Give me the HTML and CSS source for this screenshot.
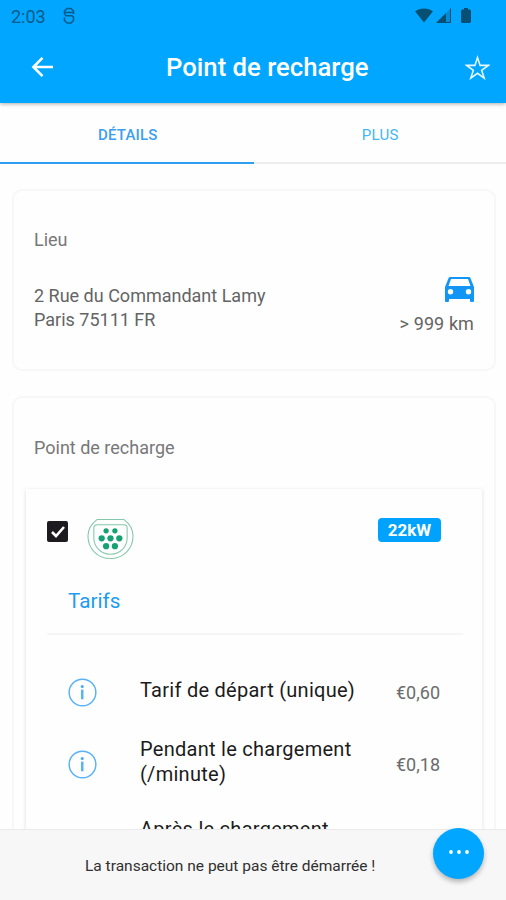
FILE: index.html
```html
<!DOCTYPE html>
<html lang="fr">
<head>
<meta charset="utf-8">
<title>Point de recharge</title>
<link rel="stylesheet" href="styles.css">
</head>
<body>
<div class="app">
  <header class="header">
    <div class="status">
      <span class="clock">2:03</span>
      <svg class="debug" viewBox="0 0 12 18"><path d="M1.500 7V4L4 1.500h4L10.500 4v3M1.500 7 3 8.700h6l1.500 1.500v3.300L8 16H4l-2.500-2.500v-3M2 5.500h8"/></svg>
      <svg class="signals" viewBox="0 0 58 18">
        <path d="M1 4.300C6 .4 14 .4 19 4.300L10 15.500z"/>
        <path d="M22 16 37 1v15z" opacity=".3"/><path d="M22 16 32 6v10zM36 2l1-1v15h-5v-1h4z"/>
        <path d="M48 2.500h2V1h4v1.500h2l1 1V15l-1 1h-8l-1-1V3.500z"/>
      </svg>
    </div>
    <div class="toolbar">
      <svg class="back" viewBox="0 0 24 22"><path d="M12 1.500 2.500 11l9.500 9.500M2.500 11H23"/></svg>
      <h1>Point de recharge</h1>
      <svg class="star" viewBox="0 0 26 25"><path d="m13 2 2.700 8.300h8.600l-7 5.100 2.700 8.200-7-5.100-7 5.100 2.700-8.200-7-5.100h8.600z"/></svg>
    </div>
  </header>
  <nav class="tabs">
    <div class="tab active"><span>DÉTAILS</span></div>
    <div class="tab"><span>PLUS</span></div>
  </nav>
  <main class="content">
    <section class="card place">
      <h2>Lieu</h2>
      <div class="place-row">
        <p class="address">2 Rue du Commandant Lamy<br>Paris 75111 FR</p>
        <div class="distance">
          <svg class="car" viewBox="0 0 29 25"><path fill-rule="evenodd" d="M5.500 0h18c1 0 1.700.5 2 1.300L29 10v14q0 1-1 1h-2q-1 0-1-1v-2H4v2q0 1-1 1H1q-1 0-1-1V10L3.500 1.300C3.800.5 4.500 0 5.500 0zM6 2 3.500 9h22L23 2zM5.500 12a2.700 2.700 0 1 0 0 5.400 2.700 2.700 0 1 0 0-5.400zM23.500 12a2.700 2.700 0 1 0 0 5.400 2.700 2.700 0 1 0 0-5.400z"/></svg>
          <span>&gt; 999 km</span>
        </div>
      </div>
    </section>
    <section class="card point">
      <h2>Point de recharge</h2>
      <div class="connector">
        <div class="connector-head">
          <svg class="check" viewBox="0 0 21 21"><rect width="21" height="21" rx="2"/><path d="m5 11 4 4L17 6"/></svg>
          <svg class="plug" viewBox="0 0 48 42">
            <path d="M10.500 1h27C43 5 47 11 47 18c0 13-10 23-23 23S1 31 1 18C1 11 5 5 10.500 1z"/>
            <path d="M10.500 6.500h27q3.500 0 3.500 3.500v10c0 9-7 16.500-17 16.500S7 29 7 20V10q0-3.500 3.500-3.500z"/>
            <g><circle cx="19.500" cy="12.700" r="2.700"/><circle cx="28.500" cy="12.700" r="2.700"/><circle cx="15" cy="20.300" r="3.200"/><circle cx="24" cy="20.300" r="3.200"/><circle cx="33" cy="20.300" r="3.200"/><circle cx="19.500" cy="28.300" r="3.200"/><circle cx="28.500" cy="28.300" r="3.200"/></g>
          </svg>
          <span class="power">22kW</span>
        </div>
        <h3>Tarifs</h3>
        <div class="rates">
          <div class="rate single">
            <svg class="info" viewBox="0 0 30 30"><circle cx="15" cy="15" r="13.800"/><path class="stem" d="M14.700 12v10"/><circle class="dot" cx="14.700" cy="8.800" r="1.600"/></svg>
            <span class="label">Tarif de départ (unique)</span><span class="price">€0,60</span>
          </div>
          <div class="rate">
            <svg class="info" viewBox="0 0 30 30"><circle cx="15" cy="15" r="13.800"/><path class="stem" d="M14.700 12v10"/><circle class="dot" cx="14.700" cy="8.800" r="1.600"/></svg>
            <span class="label">Pendant le chargement<br>(/minute)</span><span class="price">€0,18</span>
          </div>
          <div class="rate last"><span class="label">Après le chargement</span></div>
        </div>
      </div>
    </section>
  </main>
  <footer class="footer">
    <p>La transaction ne peut pas être démarrée !</p>
    <div class="fab"><svg viewBox="0 0 20 4"><circle cx="2" cy="2" r="1.900"/><circle cx="10" cy="2" r="1.900"/><circle cx="18" cy="2" r="1.900"/></svg></div>
  </footer>
</div>
</body>
</html>
```
FILE: styles.css
```css
* { box-sizing: border-box; margin: 0; padding: 0; }
body { font-family: Roboto, sans-serif; background: #fefefe; color: #646464; }
svg { display: block; flex: none; }
.app { width: 506px; height: 900px; display: flex; flex-direction: column; overflow: hidden; white-space: nowrap; }
.header { height: 103px; flex: none; background: #00a6ff; box-shadow: 0 1px 4px #0005; position: relative; }
.status { height: 34px; display: flex; align-items: center; padding: 0 34px 2px 11px; color: #075b88; }
.clock { font-size: 18px; }
.debug { width: 12px; height: 18px; margin-left: 17px; fill: none; stroke: #075b88; stroke-width: 1.600; }
.signals { width: 58px; height: 18px; margin-left: auto; fill: #075073; }
.toolbar { height: 66px; display: flex; align-items: center; padding: 0 16px 0 31px; }
.back { width: 23px; height: 22px; fill: none; stroke: #fff; stroke-width: 2.700; }
.toolbar h1 { font-size: 25.700px; font-weight: 500; color: #fff; margin-left: 112px; }
.star { width: 25px; height: 25px; margin-left: auto; fill: none; stroke: #e5f7ff; stroke-width: 1.600; }
.tabs { height: 61px; flex: none; display: flex; }
.tab { flex: 1; height: 61px; display: flex; align-items: center; justify-content: center; font-size: 15px; letter-spacing: .3px; color: #43b7f2; border-bottom: 2px solid #eee; padding: 4px 0 0 1px; }
.tab.active { color: #3b9ff0; border-color: #2e9df2; font-weight: 500; letter-spacing: .2px; padding-left: 2px; }
.content { flex: 1; min-height: 0; overflow: hidden; padding: 25px 10px 0 12px; }
.card { border: 2px solid #f7f7f7; border-radius: 10px; background: #fefefe; }
.card h2 { font-size: 18px; line-height: 22px; font-weight: 400; color: #787878; padding-top: 1px; height: 22px; }
.place { height: 182px; padding: 37px 20px 0; }
.place-row { display: flex; justify-content: space-between; margin-top: 27px; }
.address { font-size: 18px; line-height: 23.500px; padding-top: 7px; }
.distance { display: flex; flex-direction: column; align-items: flex-end; font-size: 18px; }
.car { width: 29px; height: 25px; fill: #1296f5; }
.distance span { margin-top: 11px; line-height: 22px; letter-spacing: .1px; }
.point { height: 600px; margin-top: 25px; padding: 38px 12px 0 12px; }
.point h2 { padding-left: 8px; }
.connector { margin-top: 31px; height: 500px; box-shadow: 0 1px 4px #0002; background: #fefefe; padding: 29px 19px 0 21px; }
.connector-head { display: flex; align-items: flex-start; }
.check { width: 21px; height: 21px; margin-top: 3px; fill: #1d1b20; }
.check path { fill: none; stroke: #fff; stroke-width: 2.600; }
.plug { width: 47px; height: 42px; margin: 0 0 0 19px; fill: none; stroke: #84c8ac; stroke-width: 1.100; }
.plug g { fill: #16a173; stroke: none; }
.power { margin-left: auto; margin-right: 22px; width: 63px; height: 24px; border-radius: 4px; background: #00a2ff; color: #fff; font-weight: 700; font-size: 17px; line-height: 24px; text-align: center; }
.connector h3 { font-size: 20.700px; line-height: 26px; font-weight: 400; color: #1c9cf2; margin-top: 28px; padding: 0 0 19px 21px; height: 47px; border-bottom: 2px solid #f6f6f6; }
.rates { padding: 41px 23px 0 21px; }
.rate { display: flex; align-items: center; height: 72px; }
.rate.single { height: 32px; margin-bottom: 20px; }
.info { width: 29px; height: 29px; fill: none; stroke: #59b2f6; stroke-width: 1.500; }
.info .stem { stroke-width: 2.600; }
.info .dot { fill: #45a8f5; stroke: none; }
.label { margin-left: 43px; font-size: 20px; letter-spacing: .27px; line-height: 25px; color: #1b1b1b; position: relative; top: -2px; }
.price { margin-left: auto; font-size: 18px; color: #6c6c6c; }
.last { height: 63px; padding-left: 29px; }
.footer { height: 71px; flex: none; background: #f7f7f7; border-top: 1px solid #eaeaea; position: relative; }
.footer p { font-size: 15.500px; color: #303030; padding: 27px 0 0 85px; }
.fab { position: absolute; left: 433px; top: -2px; width: 51px; height: 51px; border-radius: 50%; background: #00a6ff; box-shadow: 0 3px 5px #0004; display: flex; align-items: center; justify-content: center; padding-bottom: 4px; }
.fab svg { width: 20px; height: 4px; fill: #fff; }
```
